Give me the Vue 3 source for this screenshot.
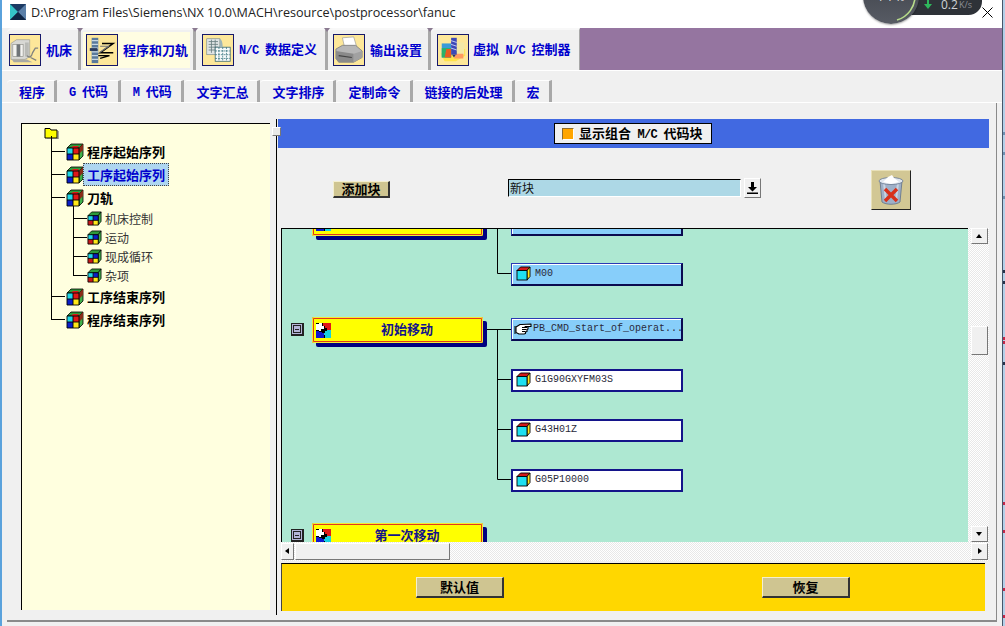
<script setup>
const mainTabs = [
  { label: '机床', icon: 'i-machine', cls: 't1' },
  { label: '程序和刀轨', icon: 'i-program', cls: 't2 on' },
  { label: 'N/C 数据定义', icon: 'i-data', cls: 't3' },
  { label: '输出设置', icon: 'i-printer', cls: 't4' },
  { label: '虚拟 N/C 控制器', icon: 'i-virtual', cls: 't5' }
]
const subTabs = ['程序', 'G 代码', 'M 代码', '文字汇总', '文字排序', '定制命令', '链接的后处理', '宏']
const seqBefore = [
  { label: '程序起始序列' },
  { label: '工序起始序列', selected: true },
  { label: '刀轨' }
]
const seqSub = ['机床控制', '运动', '现成循环', '杂项']
const seqAfter = [{ label: '工序结束序列' }, { label: '程序结束序列' }]

const blocks = [
  { top: -19, label: '' },
  { top: 88, label: '初始移动' },
  { top: 294, label: '第一次移动' }
]
const codes = [
  { top: -16, text: '', tone: 'blue' },
  { top: 34, text: 'M00', tone: 'blue', icon: 'i-cube' },
  { top: 89, text: 'PB_CMD_start_of_operat...', tone: 'blue', icon: 'i-hand', hand: true },
  { top: 140, text: 'G1G90GXYFM03S', tone: 'white', icon: 'i-cube' },
  { top: 190, text: 'G43H01Z', tone: 'white', icon: 'i-cube' },
  { top: 240, text: 'G05P10000', tone: 'white', icon: 'i-cube' }
]
const flecks = [
  { top: 132, c: '#6d8fb0' }, { top: 152, c: '#6d8fb0' }, { top: 196, c: '#6d8fb0' },
  { top: 270, c: '#27324a' }, { top: 281, c: '#27324a' },
  { top: 337, c: '#c0274a' }, { top: 341, c: '#c0274a' }, { top: 362, c: '#27324a' },
  { top: 502, c: '#c0274a' }, { top: 530, c: '#c0274a' }, { top: 588, c: '#c0274a' },
  { top: 615, c: '#c0274a' }
]
function segs(label) {
  return label.split(/([A-Za-z/ ]+)/).filter(Boolean).map(t => ({ t, m: /^[A-Za-z/ ]+$/.test(t) }))
}
</script>

<template>
  <div class="screen">
    <svg class="defs" width="0" height="0" aria-hidden="true">
      <defs>
        <symbol id="i-rubik" viewBox="0 0 18 18">
          <path d="M1 5 5 1h12l-4 4z" fill="#2e9a3a" stroke="#000" stroke-width=".8"/>
          <path d="M7 3h6l-2 2H5z" fill="#e01818"/>
          <path d="M13 5l4-4v12l-4 4z" fill="#3fb04a" stroke="#000" stroke-width=".8"/>
          <path d="M13 5l4-4v6l-4 4z" fill="#8a2d18"/>
          <rect x="1" y="5" width="6" height="6" fill="#1fd8e8"/>
          <rect x="7" y="5" width="6" height="6" fill="#e01818"/>
          <rect x="1" y="11" width="6" height="6" fill="#0a1ec8"/>
          <rect x="7" y="11" width="6" height="6" fill="#ffe81a"/>
          <path d="M1 5h12v12H1zM7 5v12M1 11h12" fill="none" stroke="#000" stroke-width=".9"/>
        </symbol>
        <symbol id="i-rubik2" viewBox="0 0 16 16">
          <path d="M1 5 5 1h10l-3 4z" fill="#2e9a3a" stroke="#000" stroke-width=".8"/>
          <path d="M12 5l3-4v10l-3 4z" fill="#3fb04a" stroke="#000" stroke-width=".8"/>
          <rect x="1" y="5" width="5.5" height="5" fill="#1fd8e8"/>
          <rect x="6.5" y="5" width="5.5" height="5" fill="#0a1ec8"/>
          <rect x="1" y="10" width="5.5" height="5" fill="#c81818"/>
          <rect x="6.5" y="10" width="5.5" height="5" fill="#ffe81a"/>
          <path d="M1 5h11v10H1zM6.5 5v10M1 10h11" fill="none" stroke="#000" stroke-width=".9"/>
        </symbol>
        <symbol id="i-cube" viewBox="0 0 15 15">
          <path d="M1 4.5 4.5 1H14l-3 3.5z" fill="#d41818" stroke="#000" stroke-width=".9"/>
          <path d="M11 4.5 14 1v9.5L11 14z" fill="#ffe81a" stroke="#000" stroke-width=".9"/>
          <rect x="1" y="4.5" width="10" height="9.5" fill="#1fe0f0" stroke="#000" stroke-width=".9"/>
        </symbol>
        <symbol id="i-puzzle" viewBox="0 0 15 15">
          <rect width="15" height="15" fill="#000"/>
          <path d="M0 1h3V0h3v3h2v3H5v2H3V7H0z" fill="#fff"/>
          <path d="M7 0h8v7h-4V5H9V3H7z" fill="#e01818"/>
          <path d="M0 8h3v1h3v1h2v5H0z" fill="#1018d0"/>
          <path d="M9 8h2V7h4v8H9v-3H8v-2h1z" fill="#19d0e0"/>
        </symbol>
        <symbol id="i-hand" viewBox="0 0 18 15">
          <path d="M2 6 6 3.500h2L17 3v2.500h-6l3 .5v2l-1 .5v2l-1.500.5v1.500L10 13H5L2 11.500z" fill="#fff" stroke="#000" stroke-width="1.100" stroke-linejoin="round"/>
          <path d="M8 6.500h5M8 8.500h4.500M8 10.500h3.500M1 5v8" fill="none" stroke="#000" stroke-width="1"/>
        </symbol>
        <symbol id="i-machine" viewBox="0 0 32 32">
          <path d="M1 9l6-4h14v18l-5 3H1z" fill="#d8d8d4" stroke="#9a9a94" stroke-width=".7"/>
          <rect x="3" y="10" width="11" height="13" fill="#f3f3f0" stroke="#8d8d88" stroke-width=".7"/>
          <rect x="7" y="10" width="4" height="13" fill="#6f7478"/>
          <path d="M16 8h4v15h-4z" fill="#b9bab6"/>
          <path d="M18 22c3 3 5 1 6-3l3-5h3M22 24l6 3" fill="none" stroke="#80827f" stroke-width="1.4"/>
          <path d="M2 26h16l6 3H4z" fill="#a8a8a3"/>
        </symbol>
        <symbol id="i-program" viewBox="0 0 32 32">
          <rect x="5" y="3" width="7" height="27" fill="#5a7a9c"/>
          <path d="M5 6h7M5 10h7M5 14h7M5 18h7M5 22h7M5 26h7" stroke="#c8d8e4" stroke-width="1.2"/>
          <rect x="3" y="14" width="8" height="3" fill="#2a3a5c"/>
          <path d="M16 9h12L14 19h14" fill="none" stroke="#000" stroke-width="1.5"/>
          <path d="M14 12h9l-10 7" fill="none" stroke="#777" stroke-width="1.2"/>
          <path d="M12 22h12l-10 3" fill="none" stroke="#000" stroke-width="1.3"/>
        </symbol>
        <symbol id="i-data" viewBox="0 0 32 32">
          <rect x="4" y="4" width="14" height="17" fill="#dfe4e4" stroke="#7b8a8a" stroke-width=".7"/>
          <path d="M6 7h10M6 10h10M6 13h10M6 16h10M9 5v14M13 5v14" stroke="#6a7f80" stroke-width=".9"/>
          <rect x="13" y="13" width="16" height="15" fill="#f7fbfb" stroke="#2e5f68" stroke-width=".8"/>
          <path d="M13 17h16M13 21h16M13 25h16M17 13v15M21 13v15M25 13v15" stroke="#2e6c78" stroke-width=".8" stroke-dasharray="2 1"/>
          <path d="M18 4c2 1 3 4 3 9h-3z" fill="#9db4b8"/>
        </symbol>
        <symbol id="i-printer" viewBox="0 0 32 32">
          <path d="M9 3l12-1 3 10H11z" fill="#fff" stroke="#999" stroke-width=".7"/>
          <path d="M2 15l7-4h14l7 6v7l-9 5H5l-3-4z" fill="#b6b6b6" stroke="#6c6c6c" stroke-width=".7"/>
          <path d="M2 17l19 3v9H5l-3-4z" fill="#8a8a8a"/>
          <path d="M21 20l9-3v7l-9 5z" fill="#a1a1a1"/>
          <path d="M5 22l14 2" stroke="#444" stroke-width="1.2"/>
        </symbol>
        <symbol id="i-virtual" viewBox="0 0 30 32">
          <path d="M2 20l8-5h18v7l-10 6H6z" fill="#ffe24a"/>
          <path d="M3 9h10v15H3z" fill="#3a9ad8"/>
          <path d="M3 14h10v10H3z" fill="#2ab06a"/>
          <path d="M8 15h5v9H6z" fill="#e85a20"/>
          <path d="M19 8h8v13h-8z" fill="#f3e9a8"/>
          <path d="M18 20h8v5H16z" fill="#ff9a60"/>
          <rect x="13" y="3" width="6" height="18" fill="#3c48b8"/>
          <path d="M13 6l6 2M13 10l6 2M13 14l6 2" stroke="#c8d0f0" stroke-width="1"/>
          <path d="M14 21h4l-2 3z" fill="#28306e"/>
        </symbol>
      </defs>
    </svg>

    <div class="strip-left"></div>

    <main class="window">
      <header class="titlebar">
        <svg class="app-icon" width="16" height="16" viewBox="0 0 16 16">
          <rect width="16" height="16" fill="#1c3a63"/>
          <path d="M0 0l8 8-8 8z" fill="#35c4c8"/>
          <path d="M16 0 8 8l8 8z" fill="#5a7fa8"/>
          <path d="M0 16l8-8 8 8z" fill="#0f2544"/>
        </svg>
        <span class="title-text">D:\Program Files\Siemens\NX 10.0\MACH\resource\postprocessor\fanuc</span>
      </header>

      <nav class="main-tabs">
        <div v-for="tab in mainTabs" :key="tab.label" class="main-tab" :class="tab.cls">
          <div class="main-tab-inner">
            <span class="tab-icon"><svg width="30" height="30"><use :href="'#' + tab.icon"/></svg></span>
            <span class="tab-label"><template v-for="s in segs(tab.label)" :key="s.t"><span :class="{ m: s.m }">{{ s.t }}</span></template></span>
          </div>
        </div>
        <div class="main-fill"></div>
      </nav>

      <nav class="sub-tabs">
        <div v-for="(tab, i) in subTabs" :key="tab" class="sub-tab" :class="{ on: i === 0 }">
          <span class="sub-label"><template v-for="s in segs(tab)" :key="s.t"><span :class="{ m: s.m }">{{ s.t }}</span></template></span>
        </div>
      </nav>

      <section class="body">
        <aside class="tree">
          <div class="folder-row">
            <svg width="15" height="12" viewBox="0 0 15 12">
              <path d="M1 3V1.500h5L7 3h6v8H1z" fill="#ffff00" stroke="#000"/>
              <path d="M14 4v8H3" fill="none" stroke="#555"/>
            </svg>
          </div>
          <div class="seq-list">
            <div v-for="n in seqBefore" :key="n.label" class="seq-row">
              <svg class="cube-l" width="18" height="18"><use href="#i-rubik"/></svg>
              <span class="seq-label" :class="{ sel: n.selected }">{{ n.label }}</span>
            </div>
            <div class="sub-list">
              <div v-for="n in seqSub" :key="n" class="sub-row">
                <svg width="15" height="15"><use href="#i-rubik2"/></svg>
                <span class="sub-text">{{ n }}</span>
              </div>
            </div>
            <div v-for="n in seqAfter" :key="n.label" class="seq-row">
              <svg class="cube-l" width="18" height="18"><use href="#i-rubik"/></svg>
              <span class="seq-label">{{ n.label }}</span>
            </div>
          </div>
        </aside>

        <div class="sash"><span class="sash-handle"></span></div>

        <div class="pane">
          <div class="pane-head">
            <label class="show-check">
              <span class="check-box"></span>
              <span class="check-text"><template v-for="s in segs('显示组合 M/C 代码块')" :key="s.t"><span :class="{ m: s.m }">{{ s.t }}</span></template></span>
            </label>
          </div>

          <div class="toolbar">
            <button class="btn add-btn">添加块</button>
            <div class="combo"><span class="combo-text">新块</span></div>
            <button class="combo-btn">
              <svg width="11" height="12" viewBox="0 0 11 12"><path d="M4 0h3v5h3L5.500 9.500 1 5h3zM0 10.500h11V12H0z" fill="#000"/></svg>
            </button>
            <button class="trash-btn">
              <svg width="28" height="30" viewBox="0 0 28 30">
                <path d="M3 6l2 21c4 3 14 3 18 0l2-21z" fill="#9fb0c8" stroke="#5f7088" stroke-width=".8"/>
                <path d="M7 8l2 18M21 8l-2 18" stroke="#c9d4e2" stroke-width="2"/>
                <ellipse cx="14" cy="6" rx="12" ry="3.500" fill="#dfe6ee" stroke="#66768e" stroke-width=".8"/>
                <path d="M6 7l5-5 4-2 2 3 5 4-8 2z" fill="#fff"/>
                <path d="M8 14l12 12M20 14 8 26" stroke="#d8301a" stroke-width="3.500"/>
              </svg>
            </button>
          </div>

          <div class="viewer">
            <div class="canvas">
              <svg class="wires" width="686" height="313">
                <path d="M215.500 0v44.500H229M205 100.500h24M215.500 100.500v150H229M215.500 150.500H229M215.500 200.500H229" fill="none" stroke="#000"/>
              </svg>
              <template v-for="b in blocks" :key="b.top">
                <span class="minus" :style="{ top: b.top + 6 + 'px' }"></span>
                <div class="block" :style="{ top: b.top + 'px' }">
                  <svg class="block-icon" width="15" height="15"><use href="#i-puzzle"/></svg>
                  <span class="block-text">{{ b.label }}</span>
                </div>
              </template>
              <div v-for="c in codes" :key="c.top" class="code" :class="c.tone" :style="{ top: c.top + 'px' }">
                <svg v-if="c.icon" class="code-icon" :class="{ hand: c.hand }" :width="c.hand ? 18 : 15" height="15"><use :href="'#' + c.icon"/></svg>
                <span class="code-text" :class="{ tight: c.hand }">{{ c.text }}</span>
              </div>
            </div>
            <div class="vscroll">
              <span class="sb-btn up"></span>
              <span class="sb-thumb v"></span>
              <span class="sb-btn down"></span>
            </div>
            <div class="hscroll">
              <span class="sb-btn left"></span>
              <span class="sb-thumb h"></span>
              <span class="sb-btn right"></span>
            </div>
          </div>

          <div class="footer-bar">
            <button class="btn foot-btn">默认值</button>
            <button class="btn foot-btn second">恢复</button>
          </div>
        </div>
      </section>
    </main>

    <div class="strip-right">
      <i v-for="(f, i) in flecks" :key="i" class="fleck" :style="{ top: f.top + 'px', background: f.c }"></i>
    </div>

    <div class="net-widget">
      <div class="net-pill">
        <svg width="8" height="9" viewBox="0 0 8 9"><path d="M3 0h2v4h3L4 9 0 4h3z" fill="#2eb85c"/></svg>
        <span class="net-val">0.2</span><span class="net-unit">K/s</span>
      </div>
      <div class="net-dial">
        <span class="net-pct">1 1 %</span>
        <svg class="net-arc" width="56" height="56" viewBox="0 0 56 56"><path d="M34 52A25 25 0 0 0 52 27" fill="none" stroke="#b7dc8a" stroke-width="1.600"/></svg>
      </div>
      <svg class="close-x" width="11" height="11" viewBox="0 0 11 11"><path d="M.5.5l10 10M10.500.5l-10 10" stroke="#000" stroke-width="1"/></svg>
    </div>
  </div>
</template>

<style>
html, body { margin: 0; padding: 0; background: #f0f0f0; }
</style>

<style scoped>
.screen {
  position: relative;
  display: flex;
  width: 1005px;
  height: 626px;
  overflow: hidden;
  background: #f0f0f0;
  font-family: "Noto Sans CJK SC", "Noto Sans", sans-serif;
  font-size: 13px;
}
.defs { position: absolute; }
.m { font-family: "Liberation Mono", monospace; font-size: 12px; letter-spacing: -.7px; white-space: pre; }
button { font-family: inherit; padding: 0; margin: 0; }

.strip-left { width: 2px; background: #5aa2dc; flex: none; }
.strip-right {
  position: relative;
  width: 3px;
  flex: none;
  background: #b4cfe8;
  box-shadow: inset 1px 0 0 #46566a;
}
.fleck { position: absolute; left: 1px; width: 2px; height: 3px; }
.window { flex: 1; min-width: 0; display: flex; flex-direction: column; }

.titlebar {
  height: 28px;
  flex: none;
  display: flex;
  align-items: center;
  background: #fff;
  padding: 0 0 4px 8px;
  box-sizing: border-box;
  gap: 5px;
}
.title-text { font-family: "Open Sans", sans-serif; font-size: 12.6px; color: #222; white-space: nowrap; }

.main-tabs {
  height: 43px;
  flex: none;
  display: flex;
  padding-left: 5px;
  box-sizing: border-box;
  border-bottom: 1px solid #fff;
  background: #f0f0f0;
}
.main-tab {
  position: relative;
  display: flex;
  align-items: stretch;
  border-right: 3px solid #a8a8a8;
  border-top: 2px solid #f8f8f8;
  border-top-left-radius: 5px;
  box-sizing: border-box;
}
.main-tab::after {
  content: "";
  position: absolute;
  right: -5px;
  top: -2px;
  border: 3px solid transparent;
  border-top: 4px solid #8a7a90;
  border-bottom: 0;
}
.t5::after { display: none; }
.t1 { width: 74px; padding-left: 2px; }
.t2 { width: 115px; padding-left: 2px; }
.t3 { width: 132px; padding-left: 6px; }
.t4 { width: 103px; padding-left: 5px; }
.t5 { width: 149px; padding-left: 6px; border-right-width: 1px; }
.t5 .main-tab-inner { gap: 4px; }
.main-tab-inner {
  display: flex;
  align-items: center;
  gap: 5px;
  height: 36px;
  margin-top: 2px;
  padding: 0 3px 0 0;
}
.t2 .main-tab-inner { background: #fffde2; padding-left: 3px; padding-right: 2px; }
.tab-icon {
  width: 32px;
  height: 32px;
  box-sizing: border-box;
  border: 1px solid #16186a;
  background: #fde79a;
  flex: none;
}
.tab-icon svg { display: block; }
.tab-label, .sub-label {
  color: #0000cd;
  font-weight: 700;
  font-size: 13px;
  line-height: 16px;
  white-space: nowrap;
}
.main-fill { flex: 1; background: #9575a0; }

.sub-tabs {
  height: 32px;
  flex: none;
  display: flex;
  align-items: flex-end;
  padding-left: 5px;
  box-sizing: border-box;
  border-bottom: 1px solid #fff;
}
.sub-tab {
  height: 22px;
  display: flex;
  align-items: center;
  box-sizing: border-box;
  padding: 0 9px 0 12px;
  border-top: 1px solid #fff;
  border-top-left-radius: 4px;
  border-right: 3px solid #a8a8a8;
}
.sub-tab:nth-child(2), .sub-tab:nth-child(3) { padding-right: 9.7px; }
.sub-tab.on .sub-label { background: #fffde2; }

.body {
  flex: 1;
  min-height: 0;
  margin: 0 5px 4px 5px;
  display: flex;
  align-items: flex-start;
  padding: 16px 0 0 14px;
  border-right: 1px solid #8a8a8a;
  border-bottom: 2px solid #8a8a8a;
  box-sizing: border-box;
}

.tree {
  width: 249px;
  height: 487px;
  margin-top: 4px;
  flex: none;
  box-sizing: border-box;
  background: #ffffdf;
  border-top: 1px solid #000;
  border-left: 1px solid #000;
  padding-left: 22px;
  color: #000;
}
.folder-row { height: 16px; padding-top: 3px; box-sizing: border-box; }
.folder-row svg { display: block; }
.seq-list { position: relative; margin-left: 7px; }
.seq-list::before {
  content: "";
  position: absolute;
  left: 0;
  top: -4px;
  height: 184px;
  width: 1px;
  background: #000;
}
.seq-row {
  position: relative;
  height: 23px;
  display: flex;
  align-items: center;
  padding-left: 15px;
  gap: 2px;
}
.seq-row::before {
  content: "";
  position: absolute;
  left: 0;
  top: 11px;
  width: 14px;
  height: 1px;
  background: #000;
}
.cube-l { flex: none; }
.seq-label {
  font-weight: 700;
  font-size: 13px;
  line-height: 21px;
  padding: 0 3px;
  margin-left: -3px;
  border: 1px dotted transparent;
  white-space: nowrap;
}
.seq-label.sel { background: #aed6f0; color: #0000cd; border-color: #444; }
.sub-list { position: relative; margin-left: 22px; }
.sub-list::before {
  content: "";
  position: absolute;
  left: 0;
  top: -3px;
  height: 69px;
  width: 1px;
  background: #000;
}
.sub-row {
  position: relative;
  height: 19px;
  display: flex;
  align-items: center;
  padding-left: 14px;
  gap: 3px;
}
.sub-row::before {
  content: "";
  position: absolute;
  left: 0;
  top: 9px;
  width: 14px;
  height: 1px;
  background: #000;
}
.sub-text { font-size: 12px; line-height: 16px; color: #333; }

.sash {
  position: relative;
  width: 1px;
  height: 496px;
  margin-left: 6px;
  background: #000;
  flex: none;
}
.sash-handle {
  position: absolute;
  left: -4px;
  top: 8px;
  width: 9px;
  height: 9px;
  box-sizing: border-box;
  background: #e8e8e8;
  border: 1px solid #777;
  border-top-color: #fff;
  border-left-color: #fff;
}

.pane { width: 711px; margin-left: 1px; flex: none; display: flex; flex-direction: column; }
.pane-head {
  height: 29px;
  background: #4169e1;
  display: flex;
  align-items: center;
  justify-content: center;
}
.show-check {
  width: 158px;
  height: 21px;
  box-sizing: border-box;
  display: flex;
  align-items: center;
  gap: 5px;
  padding-left: 7px;
  margin-right: 1px;
  background: #f0f0f0;
  border: 1px solid #000;
}
.check-box {
  width: 12px;
  height: 12px;
  box-sizing: border-box;
  background: #ffa500;
  border: 1px solid #fff;
  border-top-color: #8a6a30;
  border-left-color: #8a6a30;
  flex: none;
}
.check-text { font-weight: 700; font-size: 13px; line-height: 16px; color: #000; white-space: nowrap; }

.toolbar {
  height: 80px;
  display: flex;
  align-items: center;
  padding-left: 55px;
  box-sizing: border-box;
}
.btn {
  background: #cfc591;
  border: 1px solid #f4efcf;
  border-right: 2px solid #333;
  border-bottom: 2px solid #333;
  font-weight: 700;
  font-size: 13px;
  color: #000;
  line-height: 14px;
  box-sizing: border-box;
}
.add-btn { width: 57px; height: 17px; margin-top: 2px; line-height: 13px; }
.combo {
  width: 233px;
  height: 18px;
  margin-left: 118px;
  box-sizing: border-box;
  background: #add8e6;
  border-top: 1px solid #000;
  border-left: 1px solid #000;
  border-right: 1px solid #fff;
  border-bottom: 1px solid #fff;
  display: flex;
  align-items: center;
  padding-left: 1px;
}
.combo-text { font-size: 12px; line-height: 16px; color: #111; }
.combo-btn {
  width: 17px;
  height: 20px;
  margin-left: 3px;
  box-sizing: border-box;
  background: #f0f0f0;
  border: 1px solid #fff;
  border-right-color: #777;
  border-bottom-color: #777;
  display: flex;
  align-items: center;
  justify-content: center;
}
.trash-btn {
  width: 40px;
  height: 40px;
  margin-left: 110px;
  margin-top: 3px;
  box-sizing: border-box;
  background: #d2c794;
  border: 1px solid #e8e0b8;
  border-right: 1px solid #222;
  border-bottom: 1px solid #222;
  display: flex;
  align-items: center;
  justify-content: center;
}

.viewer {
  margin-left: 3px;
  width: 708px;
  display: grid;
  grid-template-columns: 687px 21px;
  grid-template-rows: 314px 19px;
}
.canvas {
  position: relative;
  overflow: hidden;
  background: #aee8d2;
  border-top: 1px solid #000;
  border-left: 1px solid #000;
  box-sizing: border-box;
}
.wires { position: absolute; left: 0; top: 0; }
.minus {
  position: absolute;
  left: 9px;
  width: 13px;
  height: 13px;
  box-sizing: border-box;
  background: #b4b4d8;
  border: 1px solid #222;
  border-right-width: 2px;
  border-bottom-width: 2px;
}
.minus::after {
  content: "";
  position: absolute;
  left: 1px;
  top: 1px;
  width: 6px;
  height: 6px;
  border: 1px solid #222;
  background: linear-gradient(#222, #222) center / 4px 1px no-repeat;
}
.block {
  position: absolute;
  left: 30px;
  width: 171px;
  height: 26px;
  box-sizing: border-box;
  display: flex;
  align-items: center;
  padding: 0 0 2px 4px;
  background: #ffff00;
  border-radius: 2px;
  box-shadow: inset 0 0 0 1px #f4ec30, inset 0 0 0 2px #e0381c, 4px 4px 0 #000080;
}
.block-icon { flex: none; margin-top: 2px; }
.block-text {
  flex: 1;
  text-align: center;
  font-weight: 700;
  font-size: 13px;
  line-height: 16px;
  color: #14148a;
}
.code {
  position: absolute;
  left: 229px;
  width: 172px;
  height: 23px;
  box-sizing: border-box;
  display: flex;
  align-items: center;
  padding: 0 0 2px 4px;
  border: 1px solid #2a3ab4;
  border-right: 2px solid #0a0a50;
  border-bottom: 2px solid #0a0a50;
}
.code.blue { background: #87cefa; box-shadow: inset 1px 1px 0 #fff; }
.code.white { background: #fff; border-top-width: 2px; border-left-width: 2px; border-color: #14148a; padding-left: 3px; }
.code-icon { flex: none; }
.code-icon.hand { margin-left: -2px; }
.code-text {
  margin-left: 4px;
  font-family: "Liberation Mono", monospace;
  font-size: 10px;
  color: #2a2a3a;
  white-space: nowrap;
}
.code-text.tight { margin-left: 1px; }

.vscroll {
  display: flex;
  flex-direction: column;
  align-items: flex-end;
  padding-right: 1px;
  background: conic-gradient(#e8e8e8 25%, #fff 0 50%, #e8e8e8 0 75%, #fff 0) 0 0 / 2px 2px;
}
.hscroll {
  grid-column: 1 / 3;
  display: flex;
  align-items: center;
  padding-right: 1px;
  background: conic-gradient(#e8e8e8 25%, #fff 0 50%, #e8e8e8 0 75%, #fff 0) 0 0 / 2px 2px;
}
.sb-btn, .sb-thumb {
  position: relative;
  box-sizing: border-box;
  background: #f0f0f0;
  border: 1px solid #fff;
  border-right-color: #777;
  border-bottom-color: #777;
  display: block;
  flex: none;
}
.sb-btn.up, .sb-btn.down { width: 17px; height: 16px; }
.sb-thumb.v { width: 17px; height: 29px; margin-top: 82px; }
.sb-btn.down { margin-top: auto; }
.sb-btn.left { width: 13px; height: 17px; }
.sb-thumb.h { width: 155px; height: 17px; margin-left: 1px; }
.sb-btn.right { width: 17px; height: 17px; margin-left: auto; }
.sb-btn::after {
  content: "";
  position: absolute;
  width: 0;
  height: 0;
  border-style: solid;
  border-color: transparent;
}
.sb-btn.up::after { left: 4px; top: 5px; border-width: 0 3.5px 4px; border-bottom-color: #000; }
.sb-btn.down::after { left: 4px; top: 5px; border-width: 4px 3.5px 0; border-top-color: #000; }
.sb-btn.left::after { left: 3px; top: 4px; border-width: 3.5px 4px 3.5px 0; border-right-color: #000; }
.sb-btn.right::after { left: 6px; top: 4px; border-width: 3.5px 0 3.5px 4px; border-left-color: #000; }

.footer-bar {
  margin: 2px 0 0 3px;
  width: 704px;
  height: 48px;
  box-sizing: border-box;
  display: flex;
  align-items: center;
  padding-left: 134px;
  background: #ffd700;
  border-top: 1px solid #000;
  border-left: 1px solid #444;
}
.foot-btn { width: 88px; height: 21px; }
.foot-btn.second { margin-left: 258px; }

.net-widget { position: absolute; left: 860px; top: 0; width: 135px; height: 28px; }
.net-pill {
  position: absolute;
  left: 40px;
  top: -12px;
  width: 82px;
  height: 27px;
  box-sizing: border-box;
  border-radius: 0 14px 14px 0;
  background: #2e3238;
  display: flex;
  align-items: flex-end;
  padding: 0 0 4px 24px;
}
.net-pill svg { margin-bottom: 2px; }
.net-val { margin-left: 9px; font-family: "Open Sans", sans-serif; font-size: 12px; line-height: 13px; color: #cfd2d6; }
.net-unit { font-family: "Open Sans", sans-serif; font-size: 9px; line-height: 12px; color: #8c9096; margin-left: 1px; }
.net-dial {
  position: absolute;
  left: 3px;
  top: -32px;
  width: 56px;
  height: 56px;
  border-radius: 50%;
  background: linear-gradient(#3b3f47, #575b64);
  box-shadow: 0 1px 2px rgba(0, 0, 0, .35);
}
.net-pct {
  position: absolute;
  left: 0;
  right: 0;
  top: 23px;
  text-align: center;
  font-family: "Open Sans", sans-serif;
  font-size: 11px;
  line-height: 12px;
  color: #eee;
}
.net-arc { position: absolute; left: 0; top: 0; }
.close-x { position: absolute; left: 122px; top: 7px; }
</style>
